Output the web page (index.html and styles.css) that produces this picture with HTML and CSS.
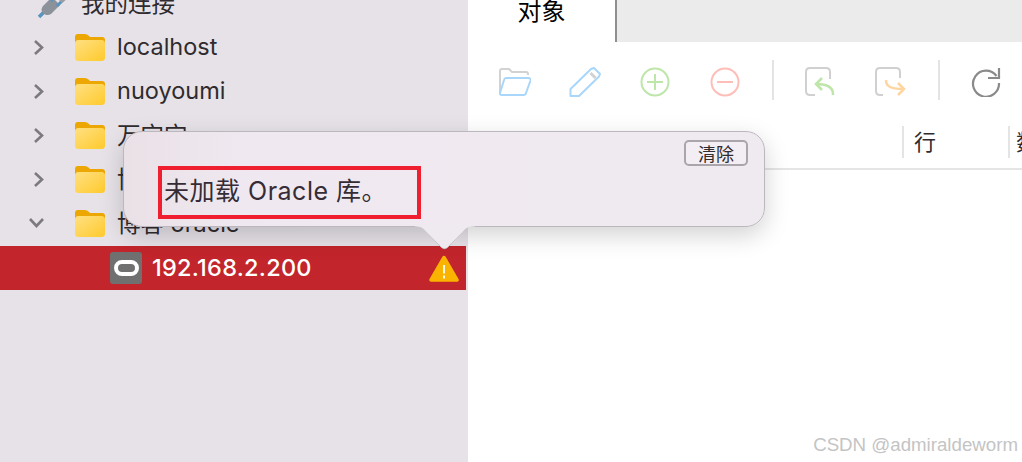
FILE: index.html
```html
<!DOCTYPE html>
<html lang="zh">
<head>
<meta charset="utf-8">
<title>Navicat</title>
<link rel="stylesheet" href="styles.css">
</head>
<body>
<div class="app">
  <aside class="sidebar">
    <div class="row row-head">
      <svg class="plug" viewBox="0 0 30 26" width="30" height="26"><path d="M2 24l7-7" stroke="#5b93bd" stroke-width="3.5" fill="none"/><path d="M6 13l9-9 8 8-9 9c-3 2-6 1-8-1s-2-4 0-7z" fill="#8b929a"/><path d="M14 8l6-6M20 13l6-6" stroke="#5b93bd" stroke-width="3" fill="none"/><path d="M20 5l5-4 5 5-5 4z" fill="#9a9fa5"/></svg>
      <span class="label">我的连接</span>
    </div>
    <div class="row">
      <svg class="chev" viewBox="0 0 12 17" width="12" height="17"><path d="M2 2l7 6.5L2 15" fill="none" stroke="#7d7a7e" stroke-width="2.6"/></svg>
      <svg class="folder" viewBox="0 0 30 27" width="30" height="27"><use href="#folder-shape"/></svg>
      <span class="label">localhost</span>
    </div>
    <div class="row">
      <svg class="chev" viewBox="0 0 12 17" width="12" height="17"><path d="M2 2l7 6.5L2 15" fill="none" stroke="#7d7a7e" stroke-width="2.6"/></svg>
      <svg class="folder" viewBox="0 0 30 27" width="30" height="27"><use href="#folder-shape"/></svg>
      <span class="label">nuoyoumi</span>
    </div>
    <div class="row">
      <svg class="chev" viewBox="0 0 12 17" width="12" height="17"><path d="M2 2l7 6.5L2 15" fill="none" stroke="#7d7a7e" stroke-width="2.6"/></svg>
      <svg class="folder" viewBox="0 0 30 27" width="30" height="27"><use href="#folder-shape"/></svg>
      <span class="label">万宝宝</span>
    </div>
    <div class="row">
      <svg class="chev" viewBox="0 0 12 17" width="12" height="17"><path d="M2 2l7 6.5L2 15" fill="none" stroke="#7d7a7e" stroke-width="2.6"/></svg>
      <svg class="folder" viewBox="0 0 30 27" width="30" height="27"><use href="#folder-shape"/></svg>
      <span class="label">博客</span>
    </div>
    <div class="row">
      <svg class="chev chev-open" viewBox="0 0 17 12" width="17" height="12"><path d="M2 2l6.5 7L15 2" fill="none" stroke="#7d7a7e" stroke-width="2.6"/></svg>
      <svg class="folder" viewBox="0 0 30 27" width="30" height="27"><use href="#folder-shape"/></svg>
      <span class="label">博客 oracle</span>
    </div>
    <div class="row row-selected">
      <span class="oracle"><span class="oracle-ring"></span></span>
      <span class="label label-conn">192.168.2.200</span>
      <svg class="warn" viewBox="0 0 30 27" width="30" height="27"><path d="M15 2.500L28 25H2z" fill="#fab400" stroke="#fab400" stroke-width="3.500" stroke-linejoin="round"/><path d="M15 10v8.500M15 20.500v3" stroke="#fff" stroke-width="1.800"/></svg>
    </div>
  </aside>

  <main class="main">
    <div class="tabbar">
      <div class="tab">对象</div>
    </div>
    <div class="toolbar">
      <span class="tool"><svg viewBox="0 0 32 28" width="32" height="28"><path d="M1 25V3q0-2 2-2h7l3 3h14q2 0 2 2v1" fill="none" stroke="#d2d2d2" stroke-width="2"/><path d="M7 10h22q3 0 2.500 2.500L27 25q-.5 2-2.500 2H3q-2.500 0-2-2l4-13q.5-2 2-2z" fill="#fff" stroke="#a9d6fb" stroke-width="2"/></svg></span>
      <span class="tool"><svg viewBox="0 0 32 30" width="32" height="30"><path d="M1.500 22L22 2l3-1 6 6-1 2.500L10 29H1.500z" fill="#fff" stroke="#a9d6fb" stroke-width="2" stroke-linejoin="round"/><path d="M21.500 6l5 5" stroke="#d2d2d2" stroke-width="3"/></svg></span>
      <span class="tool"><svg viewBox="0 0 30 30" width="30" height="30"><circle cx="15" cy="15" r="13.500" fill="none" stroke="#bde6a8" stroke-width="2"/><path d="M15 7v16M7 15h16" stroke="#bde6a8" stroke-width="2"/></svg></span>
      <span class="tool"><svg viewBox="0 0 30 30" width="30" height="30"><circle cx="15" cy="15" r="13.500" fill="none" stroke="#ffbdb8" stroke-width="2"/><path d="M7 15h16" stroke="#ffbdb8" stroke-width="2"/></svg></span>
      <span class="sep sep-first"></span>
      <span class="tool"><svg viewBox="0 0 30 30" width="30" height="30"><path d="M10 28H5q-4 0-4-4V5q0-4 4-4h16q4 0 4 4v7" fill="none" stroke="#d0d0d0" stroke-width="2"/><path d="M28 28v-1c0-6-5-10-17-10M17 11l-6 6 6 6" fill="none" stroke="#bde6a8" stroke-width="2.500"/></svg></span>
      <span class="tool"><svg viewBox="0 0 32 30" width="32" height="30"><path d="M9 28H6q-4 0-4-4V5q0-4 4-4h16q4 0 4 4v6" fill="none" stroke="#d0d0d0" stroke-width="2"/><path d="M12 13c0 6 4 9 17 9M24 16l6 6-6 6" fill="none" stroke="#ffd6a0" stroke-width="2.500"/></svg></span>
      <span class="sep sep-second"></span>
      <span class="tool tool-last"><svg viewBox="0 0 30 30" width="30" height="30"><path d="M25.500 9A13 13 0 1 0 28 16" fill="none" stroke="#8a8a8a" stroke-width="2.200"/><path d="M28 1v10H17" fill="none" stroke="#8a8a8a" stroke-width="2.200"/></svg></span>
    </div>
    <div class="thead">
      <div class="th th-rows">行</div>
      <div class="th th-data">数据</div>
    </div>
    <div class="watermark">CSDN @admiraldeworm</div>
  </main>
</div>

<div class="popover">
  <div class="popover-actions"><button class="clear" type="button">清除</button></div>
  <div class="message">未加载 Oracle 库。</div>
  <svg class="popover-tip" viewBox="0 0 60 25" width="60" height="25"><path d="M0 1c5 0 8 1 11 5L26.500 22.500q3 2.500 6 0L48 6c3-4 6-5 12-5" fill="#efe9f0" stroke="#bcb7bd" stroke-width="1"/><path d="M0 0h60v1.500c-6 0-9 1-12 5L32.500 22q-3 2.500-6 0L11 6.500C8 2.500 5 1.500 0 1.500z" fill="#efe9f0"/></svg>
</div>

<svg class="defs" width="0" height="0">
  <defs>
    <linearGradient id="folder-fill" x1="0" y1="0" x2="1" y2="1"><stop offset="0" stop-color="#ffe082"/><stop offset="1" stop-color="#ffca2c"/></linearGradient>
    <g id="folder-shape">
      <path d="M0 24V3q0-3 3-3h7q2 0 3.500 1.500L15 3h12q3 0 3 3v15H0z" fill="#eda702"/>
      <rect x="0" y="6" width="30" height="21" rx="3.500" fill="url(#folder-fill)"/>
    </g>
  </defs>
</svg>
</body>
</html>
```

FILE: styles.css
```css
* { box-sizing: border-box; }
html, body { margin: 0; height: 100%; }
body {
  width: 1022px;
  height: 462px;
  overflow: hidden;
  background: #fff;
  font-family: Inter, "Noto Sans CJK SC", sans-serif;
  color: #2f2b2e;
}
.app { display: flex; height: 462px; }

/* sidebar */
.sidebar {
  width: 468px;
  flex: none;
  padding-right: 2px;
  background: #e6e2e8;
  overflow: hidden;
}
.row {
  height: 44px;
  display: flex;
  align-items: center;
  padding-left: 33px;
  font-size: 23.500px;
}
.row-head { margin-top: -19px; height: 44px; padding-left: 37px; }
.row-head .label { margin-left: 14px; }
.plug { margin-top: 6px; }
.chev { flex: none; width: 12px; }
.chev-open { width: 17px; margin-left: -5px; }
.folder { flex: none; margin-left: 30px; }
.label { margin-left: 12px; margin-bottom: 2px; white-space: nowrap; }
.row-selected {
  margin-top: 1px;
  background: #c2252b;
  color: #fff;
  padding-left: 110px;
  padding-right: 7px;
}
.oracle {
  width: 32px;
  height: 32px;
  flex: none;
  border-radius: 3px;
  background: #707070;
  display: flex;
  align-items: center;
  justify-content: center;
}
.oracle-ring {
  width: 25px;
  height: 16px;
  border: 4px solid #fff;
  border-radius: 8px;
}
.label-conn { margin-left: 10px; flex: 1; letter-spacing: .25px; font-weight: 500; }
.warn { flex: none; }

/* main */
.main { flex: 1; min-width: 0; position: relative; }
.tabbar { height: 42px; background: #ebebeb; display: flex; }
.tab {
  width: 149px;
  height: 42px;
  background: #fff;
  border-right: 2px solid #8f8f8f;
  color: #000;
  font-size: 24px;
  line-height: 24px;
  text-align: center;
}
.toolbar {
  height: 80px;
  padding: 0 0 0 12px;
  display: flex;
  align-items: center;
}
.tool {
  width: 70px;
  flex: none;
  display: flex;
  justify-content: center;
  align-items: center;
}
.sep { width: 2px; height: 40px; flex: none; background: #e4e4e4; }
.sep-first { margin: 0 11px 4px 12px; }
.sep-second { margin: 0 11px 4px 13px; }
.thead {
  height: 46px;
  margin-top: 2px;
  border-bottom: 2px solid #e5e5e5;
  display: flex;
  padding: 2px 0 10px 434px;
  font-size: 22px;
}
.th {
  border-left: 2px solid #e4e4e4;
  padding-left: 10px;
  line-height: 32px;
  overflow: hidden;
  white-space: nowrap;
}
.th-rows { width: 106px; }
.th-data { flex: 1; padding-left: 6px; }
.watermark {
  position: absolute;
  right: 4px;
  bottom: 6px;
  font-family: "Liberation Sans", sans-serif;
  font-size: 18.700px;
  color: #c4c4c4;
  white-space: nowrap;
}

/* popover */
.popover {
  position: absolute;
  left: 123px;
  top: 131px;
  width: 642px;
  height: 96px;
  padding: 8px 16px 0 34px;
  background: linear-gradient(90deg, #e9e1e6 0, #f0e8f0 18%, #efeaf0 100%);
  border: 1px solid #bcb7bd;
  border-radius: 19px;
  box-shadow: 0 8px 24px rgba(0, 0, 0, .18);
}
.popover-actions { display: flex; justify-content: flex-end; height: 26px; }
.clear {
  width: 64px;
  height: 26px;
  padding: 0;
  border: 2px solid #aaa5ab;
  border-radius: 5px;
  background: #f3eef3;
  color: #2f2b2e;
  font-family: "Noto Sans CJK SC", sans-serif;
  font-size: 18px;
  line-height: 20px;
}
.message {
  width: 263px;
  height: 53px;
  border: 4px solid #f01f30;
  padding-left: 2px;
  font-family: Inter, "Noto Sans CJK SC", sans-serif;
  font-size: 25px;
  letter-spacing: .5px;
  line-height: 42px;
  white-space: nowrap;
  color: #352c35;
}
.popover-tip {
  position: absolute;
  left: 291px;
  top: 93px;
}
.defs { position: absolute; }
```
